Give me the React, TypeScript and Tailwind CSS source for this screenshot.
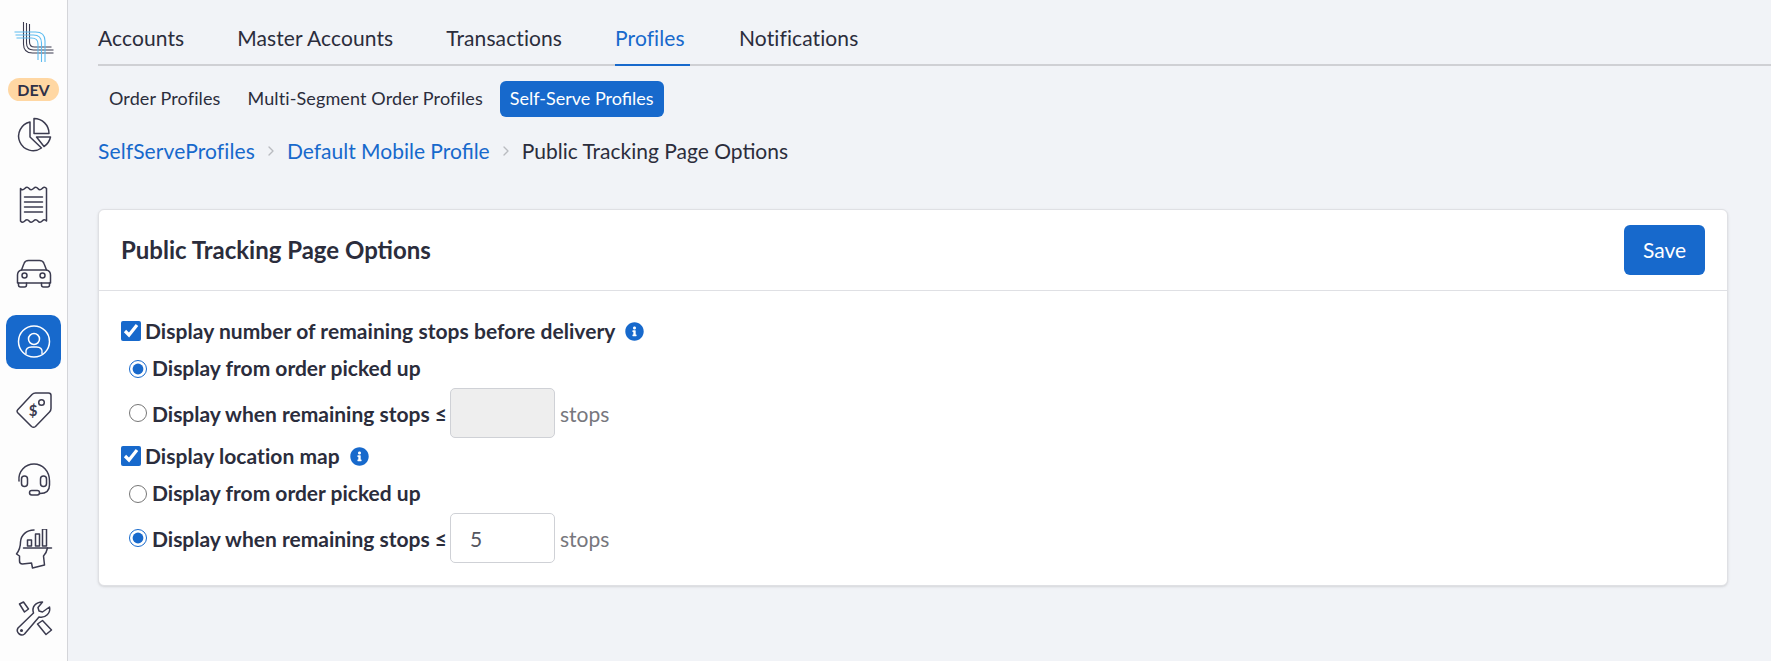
import { ChevronRight } from 'lucide-react';
import { FaInfoCircle } from 'react-icons/fa';
import type { ReactNode } from 'react';

const tabs = ['Accounts', 'Master Accounts', 'Transactions', 'Profiles', 'Notifications'];
const subTabs = ['Order Profiles', 'Multi-Segment Order Profiles', 'Self-Serve Profiles'];

function NavIcon({ center, active, children }: { center: number; active?: boolean; children: ReactNode }) {
  return (
    <div className={`flex h-[54px] w-[55px] items-center justify-center rounded-[10px] ${active ? 'bg-[#1769cc]' : ''}`}>
      <svg
        viewBox={`13.5 ${center - 20} 40 40`}
        width={40}
        height={40}
        fill="none"
        stroke={active ? '#ffffff' : '#3b3b4f'}
        strokeWidth={1.5}
        strokeLinecap="round"
        strokeLinejoin="round"
      >
        {children}
      </svg>
    </div>
  );
}

function Sidebar() {
  return (
    <aside className="flex w-[68px] shrink-0 flex-col items-center border-r border-[#d4d5d9] bg-[#fdfdfd] pt-[20px]">
      <svg viewBox="13.5 20 40 44" width={40} height={44} fill="none" strokeWidth={1.1}>
        <g stroke="#3b3b4f">
          <path d="M23 22V44Q23 53 32 53H53" />
          <path d="M26 23V43Q26 50 33 50H53" />
          <path d="M29 24V42Q29 47 34 47H51" />
        </g>
        <g stroke="#5cbcf0">
          <path d="M14 32H35Q44.5 32 44.5 41V62" />
          <path d="M15 35H33Q41 35 41 43V62" />
          <path d="M16 38H31Q37.5 38 37.5 44V60" />
        </g>
      </svg>
      <div className="mt-[14px] flex h-[23px] w-[51px] items-center justify-center rounded-full bg-[#ffd7a3] text-[16px] font-bold text-[#2f3148]">
        DEV
      </div>
      <div className="mt-[7px] flex flex-col gap-[15px]">
        <NavIcon center={135}>
          <path d="M29.5 122A14.5 14.5 0 1 0 41 148L29.5 137Z" />
          <path d="M33.5 118.5A15 15 0 0 1 48.5 133.5H33.5Z" />
          <path d="M36 137H50A15 15 0 0 1 43.5 146.5Z" />
        </NavIcon>
        <NavIcon center={204}>
          <path d="M20 188.5Q22 191 24.3 188.5T28.6 188.5T33 188.5T37.4 188.5T41.7 188.5T46 188.5V221Q44 218.5 41.7 221T37.4 221T33 221T28.6 221T24.3 221T20 221Z" />
          <path d="M24 197H42M24 202H42M24 207H42M24 212H42" />
        </NavIcon>
        <NavIcon center={273}>
          <path d="M21 270L23.5 263.5Q24.5 260.5 28 260.5H39Q42.5 260.5 43.5 263.5L46 270" />
          <path d="M21 270H46Q50 271 50 275V283H17V275Q17 271 21 270Z" />
          <circle cx="24" cy="275.5" r="2.5" />
          <circle cx="42" cy="275.5" r="2.5" />
          <path d="M18 283V285Q18 287 20 287H24Q26 287 26 285V283M41 283V285Q41 287 43 287H47Q49 287 49 285V283" />
        </NavIcon>
        <NavIcon center={342} active>
          <circle cx="33.5" cy="341.5" r="15.5" />
          <circle cx="33.5" cy="339" r="5.5" />
          <path d="M25.5 353.5C24.5 349 27.5 347 31 347H36C39.5 347 42.5 349 41.5 353.5" />
        </NavIcon>
        <NavIcon center={411}>
          <path d="M17 410L31.5 394.5Q33 393 35 393H48Q50.5 393 50.5 395.5V408.5Q50.5 410.5 49 412L35 426.5Q33 428 31 426.5L17 412.5Q16 411 17 410Z" />
          <circle cx="41" cy="402.5" r="2.8" />
          <text x="32.7" y="416" textAnchor="middle" fontSize="15" fontWeight="700" fontFamily="Lato, sans-serif" fill="#3b3b4f" stroke="none">
            $
          </text>
        </NavIcon>
        <NavIcon center={480}>
          <path d="M18.5 481C17.5 471 25 464 33.5 464C42 464 49 471 49 481V485C49 490 46 493.5 39.5 493.5" />
          <rect x="21" y="476" width="6" height="10.5" rx="3" />
          <rect x="40" y="476" width="6" height="10.5" rx="3" />
          <rect x="29" y="490.5" width="10" height="4.5" rx="2.2" />
        </NavIcon>
        <NavIcon center={549}>
          <path d="M33.5 530C26 530 20.5 535 20 542C20 546 19 550 16 554L19 556V561Q19 564 22 564L31 563L32 568L44 565L43 556Q46 553 47 548" />
          <path d="M23 548H51" />
          <rect x="27" y="540" width="4" height="6" />
          <rect x="35" y="534" width="4" height="12" />
          <rect x="42" y="529" width="4" height="17" />
        </NavIcon>
        <NavIcon center={618}>
          <path d="M42 602L37.5 607.5L38.5 611L42 612L49 607C50.5 613 45 618.5 38.5 617L24 634C20 637 15 632 17.5 628L33 613C31 607 35 602 42 602Z" />
          <circle cx="21" cy="630.5" r="0.8" />
          <path d="M19 604L23 602L28 609L24 612Z" />
          <path d="M37 624L42 620.5L51 630L45.5 634.5Z" />
        </NavIcon>
      </div>
    </aside>
  );
}

function RemainingStops({ checked, value, disabled }: { checked: boolean; value?: string; disabled?: boolean }) {
  return (
    <div className="flex h-[50px] items-center pl-[8px]">
      <input type="radio" checked={checked} readOnly className="size-[18px] shrink-0 accent-[#1769cc]" />
      <span className="ml-[5px] pt-[2px] font-bold">Display when remaining stops ≤</span>
      <input
        type="text"
        value={value ?? ''}
        disabled={disabled}
        readOnly
        className={`ml-[3px] h-[50px] w-[105px] rounded-[5px] border border-[#cfd1d6] pr-[20px] pl-[19px] text-[21px] text-[#55565f] ${disabled ? 'bg-[#eeeeee]' : 'bg-white'}`}
      />
      <span className="ml-[5px] pt-[2px] text-[#77777d]">stops</span>
    </div>
  );
}

function PickedUp({ checked }: { checked: boolean }) {
  return (
    <div className="mt-[14px] flex h-[24px] items-center pl-[8px]">
      <input type="radio" checked={checked} readOnly className="size-[18px] shrink-0 accent-[#1769cc]" />
      <span className="ml-[5px] pb-[2px] font-bold">Display from order picked up</span>
    </div>
  );
}

function CheckRow({ label }: { label: string }) {
  return (
    <div className="flex h-[24px] items-center">
      <input type="checkbox" checked readOnly className="size-[20px] shrink-0 accent-[#1769cc]" />
      <span className="ml-[4px] font-bold tracking-[0.05px]">{label}</span>
      <FaInfoCircle className="ml-[10px] size-[19px] text-[#1769cc]" />
    </div>
  );
}

export default function App() {
  return (
    <div className="flex min-h-screen bg-[#f1f3f7] font-['Lato',sans-serif] text-[#2b2d3c]">
      <Sidebar />
      <main className="flex-1 pl-[30px]">
        <nav className="flex h-[66px] gap-[53px] border-b-2 border-[#cfd0d4] pt-[23px] text-[21px] leading-[30px] tracking-[0.1px]">
          {tabs.map((tab) => (
            <div
              key={tab}
              className={
                tab === 'Profiles'
                  ? 'mr-[-4px] h-[43px] w-[75px] border-b-2 border-[#1769cc] text-[#1769cc]'
                  : ''
              }
            >
              {tab}
            </div>
          ))}
        </nav>

        <div className="mt-[15px] ml-[1px] flex gap-[7px] text-[18px]">
          {subTabs.map((tab) => (
            <div
              key={tab}
              className={`flex h-[36px] items-center rounded-[6px] px-[10px] pb-[1px] ${
                tab === 'Self-Serve Profiles' ? 'bg-[#1769cc] text-white' : 'tracking-[0.12px]'
              }`}
            >
              {tab}
            </div>
          ))}
        </div>

        <div className="mt-[20px] flex h-[30px] items-center pb-[2px] text-[21px]">
          <span className="text-[#1769cc] tracking-[0.12px]">SelfServeProfiles</span>
          <ChevronRight className="mx-[8px] size-[16px] text-[#b9bbc0]" />
          <span className="text-[#1769cc]">Default Mobile Profile</span>
          <ChevronRight className="mx-[8px] size-[16px] text-[#b9bbc0]" />
          <span>Public Tracking Page Options</span>
        </div>

        <section className="mt-[42px] mr-[43px] rounded-[6px] border border-[#dfe0e4] bg-white shadow-sm">
          <header className="flex h-[81px] items-center justify-between border-b border-[#dfe0e4] pr-[22px] pl-[22px]">
            <h2 className="text-[24px] font-bold">Public Tracking Page Options</h2>
            <button className="h-[50px] w-[81px] rounded-[6px] bg-[#1769cc] text-[21px] text-white">Save</button>
          </header>
          <div className="pt-[28px] pr-[22px] pb-[22px] pl-[22px] text-[21px]">
            <CheckRow label="Display number of remaining stops before delivery" />
            <PickedUp checked />
            <div className="mt-[7px]">
              <RemainingStops checked={false} disabled />
            </div>
            <div className="mt-[6px]">
              <CheckRow label="Display location map" />
            </div>
            <PickedUp checked={false} />
            <div className="mt-[7px]">
              <RemainingStops checked value="5" />
            </div>
          </div>
        </section>
      </main>
    </div>
  );
}
